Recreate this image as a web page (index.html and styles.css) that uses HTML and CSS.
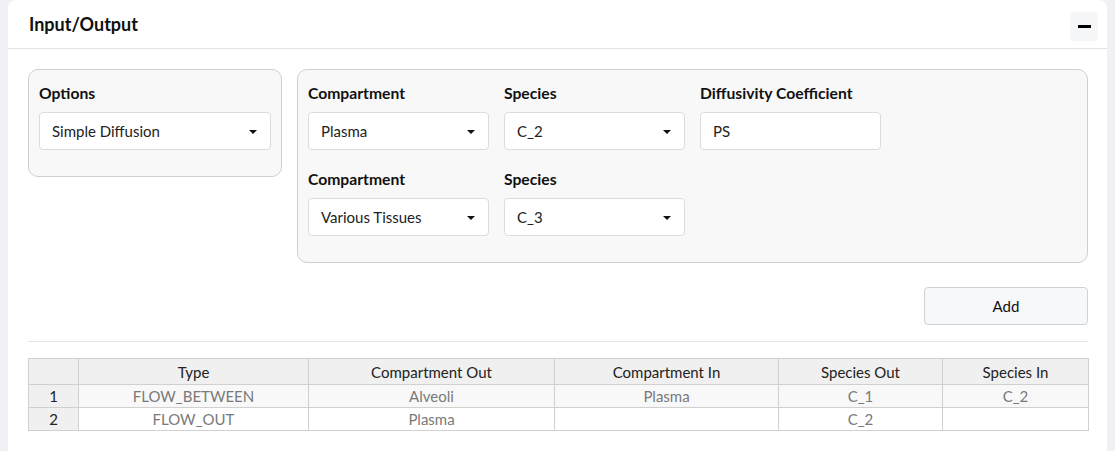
FILE: index.html
```html
<!DOCTYPE html>
<html>
<head>
<meta charset="utf-8">
<link rel="stylesheet" href="styles.css">
</head>
<body>
<div class="card">
  <div class="card-header">
    <div class="title">Input/Output</div>
    <button class="collapse"><span class="dash"></span></button>
  </div>
  <div class="card-body">
    <div class="panels">
      <div class="panel options">
        <div class="group">
          <div class="label">Options</div>
          <div class="select">Simple Diffusion<span class="caret"></span></div>
        </div>
      </div>
      <div class="panel fields">
        <div class="group">
          <div class="label">Compartment</div>
          <div class="select">Plasma<span class="caret"></span></div>
        </div>
        <div class="group">
          <div class="label">Species</div>
          <div class="select">C_2<span class="caret"></span></div>
        </div>
        <div class="group">
          <div class="label">Diffusivity Coefficient</div>
          <div class="input">PS</div>
        </div>
        <div class="group">
          <div class="label">Compartment</div>
          <div class="select">Various Tissues<span class="caret"></span></div>
        </div>
        <div class="group">
          <div class="label">Species</div>
          <div class="select">C_3<span class="caret"></span></div>
        </div>
      </div>
    </div>
    <div class="actions"><button class="add">Add</button></div>
    <div class="rule"></div>
    <table class="grid">
      <colgroup>
        <col class="c0"><col class="c1"><col class="c2"><col class="c3"><col class="c4"><col class="c5">
      </colgroup>
      <thead>
        <tr><th></th><th>Type</th><th>Compartment Out</th><th>Compartment In</th><th>Species Out</th><th>Species In</th></tr>
      </thead>
      <tbody>
        <tr class="odd"><td class="idx">1</td><td>FLOW_BETWEEN</td><td>Alveoli</td><td>Plasma</td><td>C_1</td><td>C_2</td></tr>
        <tr><td class="idx">2</td><td>FLOW_OUT</td><td>Plasma</td><td></td><td>C_2</td><td></td></tr>
      </tbody>
    </table>
  </div>
</div>
</body>
</html>
```
FILE: styles.css
```css
html, body {
  margin: 0;
  padding: 0;
}
body {
  background: #f0f1f5;
  padding: 0 8px;
  font-family: Lato, "Noto Sans", sans-serif;
  color: #111;
  height: 451px;
  overflow: hidden;
}
.card {
  background: #fff;
  border-radius: 8px 8px 0 0;
  height: 460px;
}
.card-header {
  height: 48px;
  border-bottom: 1px solid #e3e3e6;
  display: flex;
  align-items: center;
  justify-content: space-between;
  padding: 0 9px 0 21px;
}
.title {
  font-weight: 700;
  font-size: 18px;
}
.collapse {
  width: 28px;
  height: 29px;
  border: none;
  border-radius: 4px;
  background: #f5f6f8;
  display: flex;
  align-items: center;
  justify-content: center;
  padding: 0;
  margin-top: 5px;
}
.dash {
  display: block;
  width: 13px;
  height: 3px;
  background: #000;
}
.card-body {
  padding: 20px 19px 0 20px;
}
.panels {
  display: flex;
  gap: 15px;
  align-items: flex-start;
}
.panel {
  background: #f8f8f8;
  border: 1px solid #cfcfcf;
  border-radius: 10px;
  padding: 13px 10px 7px 10px;
}
.options {
  width: 232px;
}
.fields {
  flex: 1;
  display: grid;
  grid-template-columns: 181px 181px 181px;
  column-gap: 15px;
}
.group {
  margin-bottom: 19px;
}
.label {
  font-weight: 700;
  font-size: 15.7px;
  line-height: 20px;
  height: 20px;
  margin-bottom: 9px;
}
.select, .input {
  height: 38px;
  box-sizing: border-box;
  background: #fff;
  border: 1px solid #dcdcdc;
  border-radius: 4px;
  display: flex;
  align-items: center;
  padding: 0 12px;
  font-size: 15px;
  color: #222;
  position: relative;
}
.caret {
  position: absolute;
  right: 13px;
  top: 17px;
  width: 0;
  height: 0;
  border-left: 4px solid transparent;
  border-right: 4px solid transparent;
  border-top: 4px solid #111;
}
.actions {
  display: flex;
  justify-content: flex-end;
  margin-top: 24px;
}
.add {
  width: 164px;
  height: 38px;
  background: #f7f8fa;
  border: 1px solid #cfd2d6;
  border-radius: 4px;
  font-family: Lato, "Noto Sans", sans-serif;
  font-size: 15px;
  color: #111;
}
.rule {
  height: 1px;
  background: #e3e3e3;
  margin: 16px 0 16px 0;
}
.grid {
  width: 100%;
  border-collapse: collapse;
  table-layout: fixed;
  font-size: 15px;
}
.c0 { width: 50px; }
.c1 { width: 230px; }
.c2 { width: 246px; }
.c3 { width: 224px; }
.c4 { width: 164px; }
.c5 { width: 146px; }
.grid th, .grid td {
  border: 1px solid #d0d0d0;
  text-align: center;
  padding: 0;
  font-weight: 400;
  line-height: 18px;
}
.grid th {
  height: 25px;
  background: #f0f0f0;
  color: #222;
}
.grid td {
  height: 22px;
  color: #7a7a7a;
}
.grid tr.odd td {
  background: #f8f8f8;
}
.grid td.idx, .grid tr.odd td.idx {
  background: #f0f0f0;
  color: #222;
}
```
